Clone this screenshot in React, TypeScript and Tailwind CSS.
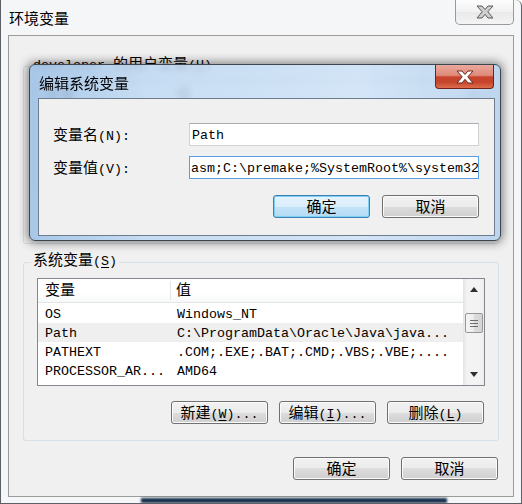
import React from "react";

const MONO = "font-['Liberation_Mono','Noto_Sans_CJK_SC',monospace] text-[13.33px]";

function T({ s }: { s: string }) {
  const parts = s.split(/([\u4e00-\u9fff]+)/);
  return (
    <>
      {parts.map((p, i) =>
        /[\u4e00-\u9fff]/.test(p) ? (
          <span key={i} className="text-[15px]">
            {p}
          </span>
        ) : (
          <span key={i}>{p}</span>
        )
      )}
    </>
  );
}

function Mn({ cn, k, tail = "" }: { cn: string; k: string; tail?: string }) {
  return (
    <>
      <T s={cn} />(<span className="underline underline-offset-[2px]">{k}</span>){tail}
    </>
  );
}

function Btn({ children, focus = false }: { children: React.ReactNode; focus?: boolean }) {
  return (
    <div
      className={
        focus
          ? "w-[97px] h-[23px] pt-[4px] rounded-[3px] border border-[#3c7fb1] bg-[linear-gradient(#e5f3fc_0%,#d9eefb_50%,#c3e3f8_50%,#b4dbf5_100%)] shadow-[inset_0_0_0_1px_#7fd0f5] flex items-center justify-center leading-[18px]"
          : "w-[97px] h-[23px] pt-[4px] rounded-[3px] border border-[#707070] bg-[linear-gradient(#f2f2f2_0%,#ebebeb_50%,#dddddd_50%,#cfcfcf_100%)] shadow-[inset_0_0_0_1px_#fbfbfb] flex items-center justify-center leading-[18px]"
      }
    >
      {children}
    </div>
  );
}

function XGlyph({ fill, edge }: { fill: string; edge: string }) {
  return (
    <svg width="18" height="14" viewBox="0 0 18 14">
      <polygon
        points="1,1 6,1 9,4.5 12,1 17,1 11.8,6.8 17,13 12,13 9,9.3 6,13 1,13 6.2,6.8"
        fill={fill}
        stroke={edge}
        strokeWidth="1"
        strokeLinejoin="round"
      />
    </svg>
  );
}

function Tri({ up }: { up: boolean }) {
  return (
    <svg width="8" height="5" viewBox="0 0 8 5">
      <polygon points={up ? "0,5 8,5 4,0" : "0,0 8,0 4,5"} fill="#2f2f2f" />
    </svg>
  );
}

function ListBox({ rows, sel }: { rows: [string, string][]; sel: number }) {
  return (
    <div className={"h-[108px] border border-[#828790] bg-white flex " + MONO}>
      <div className="flex-1 flex flex-col">
        <div className="h-[24px] flex border-b border-[#e5e5e5] bg-[linear-gradient(#ffffff_0%,#ffffff_60%,#f7f8f9_100%)]">
          <div className="w-[133px] pl-[7px] pt-[3px] flex items-center border-r border-[#e5e5e5] my-[2px]">
            <T s="变量" />
          </div>
          <div className="pl-[5px] pt-[3px] flex items-center">
            <T s="值" />
          </div>
        </div>
        <div className="h-[1px]" />
        {rows.map((r, i) => (
          <div key={i} className={i === sel ? "h-[19px] pt-[2px] flex items-center bg-[#efefef]" : "h-[19px] pt-[2px] flex items-center"}>
            <div className="w-[133px] pl-[7px] whitespace-nowrap">{r[0]}</div>
            <div className="pl-[6px] whitespace-nowrap">{r[1]}</div>
          </div>
        ))}
      </div>
      <div className="w-[21px] flex flex-col items-center bg-[linear-gradient(to_right,#e4e4e4,#f3f3f3_20%,#f3f3f3_80%,#ececec)]">
        <div className="h-[21px] flex items-center justify-center">
          <Tri up />
        </div>
        <div className="mt-[13px] w-[18px] h-[20px] rounded-[2px] border border-[#979797] bg-[linear-gradient(to_right,#f4f4f4,#ececec_50%,#dcdcdc_50%,#d4d4d4)] flex flex-col items-center justify-center gap-[2px]">
          <div className="w-[8px] h-[1px] bg-[#6f6f6f]" />
          <div className="w-[8px] h-[1px] bg-[#6f6f6f]" />
          <div className="w-[8px] h-[1px] bg-[#6f6f6f]" />
        </div>
        <div className="flex-1" />
        <div className="h-[21px] flex items-center justify-center">
          <Tri up={false} />
        </div>
      </div>
    </div>
  );
}

export default function App() {
  return (
    <div className={"w-[522px] h-[504px] bg-white " + MONO}>
      <div className="relative w-[522px] h-[504px] flex flex-col border-x border-b border-[#5c6066] rounded-tr-[6px] bg-[#f5f6f8] text-black overflow-hidden">
        <div className="h-[35px] flex items-start justify-between">
          <span className="ml-[8px] mt-[8px] leading-[20px] text-[15px] font-['Noto_Sans_CJK_SC',sans-serif]">
            环境变量
          </span>
          <div className="mr-[7px] w-[59px] h-[25px] border border-t-0 border-[#9a9a9a] rounded-b-[5px] bg-[linear-gradient(#fdfdfd,#f1f1f1_50%,#e9e9e9_50%,#f4f4f4)] flex items-center justify-center">
            <XGlyph fill="#d0d0d0" edge="#5a5a5a" />
          </div>
        </div>

        <div className="mx-[7px] h-[462px] border border-[#9b9b9b] bg-[#f0f0f0] flex flex-col px-[14px] pt-[21px]">
          <fieldset className="h-[187px] min-w-0 border border-[#d5dfe5] rounded-[3px] overflow-hidden">
            <legend className="ml-[7px] px-[2px] leading-[18px]">
              developer <Mn cn="的用户变量" k="U" />
            </legend>
            <div className="px-[13px] pt-[7px]">
              <ListBox
                rows={[
                  ["TEMP", "%USERPROFILE%\\AppData\\Local\\Temp"],
                  ["TMP", "%USERPROFILE%\\AppData\\Local\\Temp"],
                ]}
                sel={-1}
              />
            </div>
          </fieldset>

          <fieldset className="mt-[9px] min-w-0 border border-[#d5dfe5] rounded-[3px]">
            <legend className="ml-[7px] px-[2px] leading-[18px]">
              <Mn cn="系统变量" k="S" />
            </legend>
            <div className="px-[13px] pt-[7px] pb-[16px]">
              <ListBox
                rows={[
                  ["OS", "Windows_NT"],
                  ["Path", "C:\\ProgramData\\Oracle\\Java\\java..."],
                  ["PATHEXT", ".COM;.EXE;.BAT;.CMD;.VBS;.VBE;...."],
                  ["PROCESSOR_AR...", "AMD64"],
                ]}
                sel={1}
              />
              <div className="mt-[15px] flex justify-end gap-[11px] pr-[1px]">
                <Btn>
                  <Mn cn="新建" k="W" tail="..." />
                </Btn>
                <Btn>
                  <Mn cn="编辑" k="I" tail="..." />
                </Btn>
                <Btn>
                  <Mn cn="删除" k="L" />
                </Btn>
              </div>
            </div>
          </fieldset>

          <div className="mt-[16px] flex justify-end gap-[11px] pr-[1px]">
            <Btn>
              <T s="确定" />
            </Btn>
            <Btn>
              <T s="取消" />
            </Btn>
          </div>
        </div>

        <div className="flex-1 flex items-center">
          <div className="ml-[140px] w-[306px] h-[5px] bg-[#18304d] blur-[1px]" />
        </div>

        {/* 编辑系统变量 dialog over the window */}
        <div className="absolute left-[28px] top-[64px] w-[472px] h-[177px] rounded-[6px] border border-[#3d4650] bg-[linear-gradient(90deg,rgba(160,194,230,0.9),rgba(192,217,242,0.88)_25%,rgba(206,226,246,0.88)_70%,rgba(184,210,238,0.9))] backdrop-blur-[3px] shadow-[0_0_10px_2px_rgba(0,0,0,0.45)] flex flex-col">
          <div className="h-[33px] flex items-start justify-between">
            <span className="ml-[9px] mt-[8px] leading-[20px] text-[15px] font-['Noto_Sans_CJK_SC',sans-serif]">
              编辑系统变量
            </span>
            <div className="mr-[6px] w-[59px] h-[24px] border border-t-0 border-[#6d241a] rounded-b-[4px] bg-[linear-gradient(#eaa99c_0%,#de8a79_45%,#c9432d_52%,#c5452c_75%,#de6d4c_100%)] flex items-center justify-center">
              <XGlyph fill="#ffffff" edge="#6a2820" />
            </div>
          </div>
          <div className="ml-[8px] w-[457px] h-[138px] border border-[#6e7d8e] bg-[#f0f0f0] flex flex-col px-[14px] pt-[24px]">
            <div className="flex items-center">
              <div className="w-[136px] pt-[4px] leading-[18px]">
                <T s="变量名(N):" />
              </div>
              <div className="w-[290px] h-[23px] pt-[2px] border border-[#cfd3d8] border-t-[#abadb3] bg-white pl-[2px] flex items-center leading-[18px] whitespace-nowrap overflow-hidden">
                Path
              </div>
            </div>
            <div className="mt-[10px] flex items-center">
              <div className="w-[136px] pt-[4px] leading-[18px]">
                <T s="变量值(V):" />
              </div>
              <div className="w-[290px] h-[23px] pt-[2px] border border-[#569de5] bg-white pl-[1px] flex items-center leading-[18px] whitespace-nowrap overflow-hidden">
                asm;C:\premake;%SystemRoot%\system32
              </div>
            </div>
            <div className="mt-[16px] flex justify-end gap-[12px] pr-[1px]">
              <Btn focus>
                <T s="确定" />
              </Btn>
              <Btn>
                <T s="取消" />
              </Btn>
            </div>
          </div>
        </div>
      </div>
    </div>
  );
}
